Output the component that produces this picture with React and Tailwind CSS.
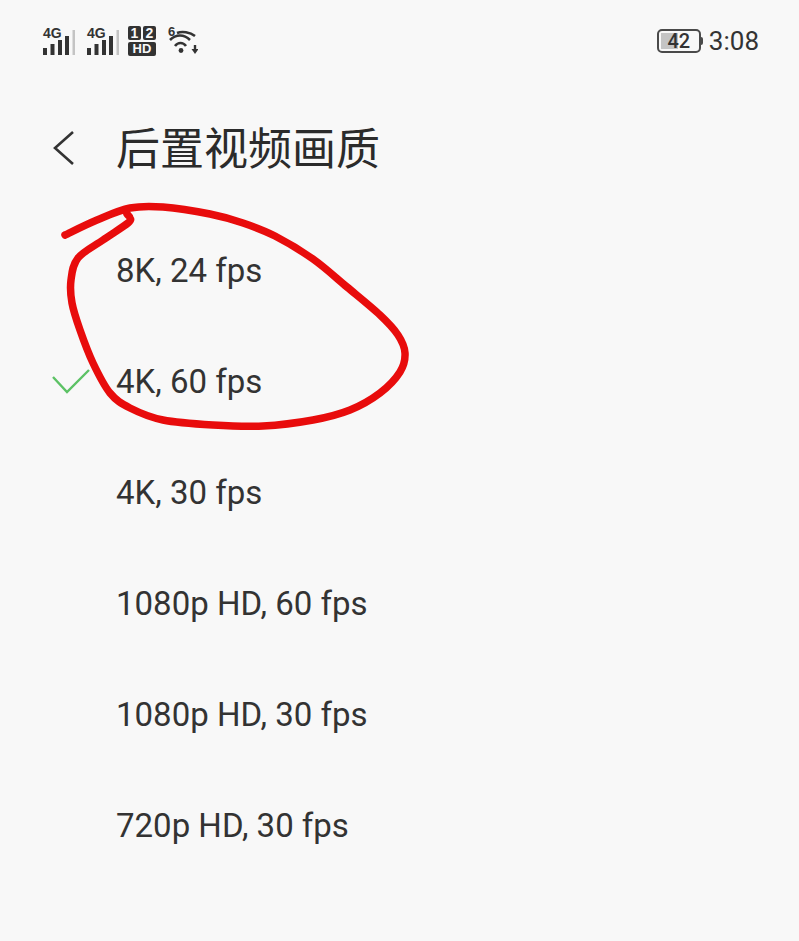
const ROWS = [
  { label: '8K, 24 fps' },
  { label: '4K, 60 fps', selected: true },
  { label: '4K, 30 fps' },
  { label: '1080p HD, 60 fps' },
  { label: '1080p HD, 30 fps' },
  { label: '720p HD, 30 fps' },
]

// hand traced points of the marker line
const SCRIBBLE = [
  [65, 235], [97, 220], [130, 208], [163, 207], [210, 214], [243, 223], [275, 236],
  [313, 259], [347, 287], [380, 315], [398, 335], [405, 353], [400, 372], [380, 393], [350, 410],
  [313, 420], [263, 426], [213, 425], [163, 420], [130, 408], [110, 393], [93, 363], [80, 330],
  [72, 303], [71, 280], [78, 258], [103, 240], [128, 223], [130, 218], [127, 214],
]

function smoothPath(points) {
  let d = `M${points[0][0]} ${points[0][1]}`
  for (let i = 0; i < points.length - 1; i++) {
    const p0 = points[i - 1] || points[i]
    const p1 = points[i]
    const p2 = points[i + 1]
    const p3 = points[i + 2] || p2
    const c1x = p1[0] + (p2[0] - p0[0]) / 6
    const c1y = p1[1] + (p2[1] - p0[1]) / 6
    const c2x = p2[0] - (p3[0] - p1[0]) / 6
    const c2y = p2[1] - (p3[1] - p1[1]) / 6
    d += `C${c1x} ${c1y} ${c2x} ${c2y} ${p2[0]} ${p2[1]}`
  }
  return d
}

function Signal() {
  return (
    <div className="relative h-[30px] w-[33px]">
      <span className="absolute left-0 top-0 text-[14px] font-bold leading-[14px] text-[#333] [font-family:'Liberation_Sans',sans-serif]">4G</span>
      <svg width="33" height="30" viewBox="0 0 33 30" className="absolute left-0 top-0">
        <rect x="0" y="22" width="4" height="7" fill="#333" />
        <rect x="7.5" y="18" width="4" height="11" fill="#333" />
        <rect x="15" y="14" width="4" height="15" fill="#333" />
        <rect x="22" y="10" width="4" height="19" fill="#333" />
        <rect x="29.5" y="4" width="2.5" height="25" fill="#c4c4c4" />
      </svg>
    </div>
  )
}

function SimBadge() {
  return (
    <div className="flex h-[30px] w-[28px] flex-col gap-[2px] text-[#f8f8f8] [font-family:'Liberation_Sans',sans-serif] font-bold">
      <div className="flex gap-[2px]">
        <span className="flex h-[14px] w-[13px] items-center justify-center rounded-[2px] bg-[#333] text-[14px] leading-none">1</span>
        <span className="flex h-[14px] w-[13px] items-center justify-center rounded-[2px] bg-[#333] text-[14px] leading-none">2</span>
      </div>
      <span className="flex h-[14px] w-[28px] items-center justify-center rounded-[2px] bg-[#333] text-[13px] leading-none">HD</span>
    </div>
  )
}

function Wifi() {
  return (
    <div className="relative h-[30px] w-[30px]">
      <span className="absolute left-0 top-0 text-[13px] font-bold leading-[12px] text-[#333] [font-family:'Liberation_Sans',sans-serif]">6</span>
      <svg width="30" height="30" viewBox="0 0 30 30" fill="none" className="absolute left-0 top-0">
        <path d="M9 7C14 5 22 6 27 10" stroke="#333" strokeWidth="2.6" />
        <path d="M2 14C8 8 16 8 22 14" stroke="#333" strokeWidth="2.6" />
        <path d="M7 20C10 16 15 16 18 20" stroke="#333" strokeWidth="2.6" />
        <circle cx="13" cy="24.5" r="2.4" fill="#333" />
        <path d="M27 19V24" stroke="#333" strokeWidth="2.4" />
        <path d="M23.5 23H30.5L27 28Z" fill="#333" />
      </svg>
    </div>
  )
}

function Battery() {
  return (
    <div className="flex items-center">
      <div className="relative flex h-[24px] w-[44px] items-center justify-center rounded-[5px] border-2 border-[#4a4a4a] p-[2px]">
        <div className="absolute inset-y-[2px] left-[2px] w-[17px] bg-[#c4c4c4]" />
        <span className="relative text-[20px] font-medium leading-none text-[#333] [font-family:Roboto,sans-serif]">42</span>
      </div>
      <div className="h-[8px] w-[2px] rounded-r-[2px] bg-[#4a4a4a]" />
    </div>
  )
}

export default function App() {
  return (
    <div className="relative h-[941px] w-[799px] overflow-hidden bg-[#f8f8f8] text-[#333] [font-family:Roboto,'Noto_Sans_CJK_SC',sans-serif]">
      <div className="flex items-center justify-between pl-[43px] pr-[40px] pt-[25px]">
        <div className="flex items-start">
          <Signal />
          <div className="ml-[11px]">
            <Signal />
          </div>
          <div className="ml-[8px]">
            <SimBadge />
          </div>
          <div className="ml-[12px]">
            <Wifi />
          </div>
        </div>
        <div className="mt-[1px] flex items-center gap-[6px]">
          <Battery />
          <span className="text-[26px] leading-[30px]">3:08</span>
        </div>
      </div>

      <div className="mt-[62px] flex h-[60px] items-center">
        <div className="flex w-[116px] shrink-0 pl-[52px]">
          <svg width="24" height="36" viewBox="0 0 24 36" fill="none">
            <path d="M21 2L3 18L21 34" stroke="#333" strokeWidth="2.6" />
          </svg>
        </div>
        <h1 className="pb-[4px] text-[44px] font-normal leading-none text-[#2b2b2b] [font-family:'Noto_Sans_CJK_SC',sans-serif]">后置视频画质</h1>
      </div>

      <ul className="mt-[37px]">
        {ROWS.map((row) => (
          <li key={row.label} className="flex h-[111px] items-center">
            <div className="flex w-[116px] shrink-0 pl-[52px]">
              {row.selected && (
                <svg width="38" height="26" viewBox="0 0 38 26" fill="none">
                  <path d="M1 8L15 23L37 1" stroke="#5cc265" strokeWidth="2.4" />
                </svg>
              )}
            </div>
            <span className="text-[33px] leading-none text-[#333]">{row.label}</span>
          </li>
        ))}
      </ul>

      {/* red marker scribble on top of the list */}
      <svg width="799" height="941" viewBox="0 0 799 941" fill="none" className="pointer-events-none absolute left-0 top-0">
        <path d={smoothPath(SCRIBBLE)} stroke="#e80c0c" strokeWidth="7.5" strokeLinecap="round" strokeLinejoin="round" />
      </svg>
    </div>
  )
}
